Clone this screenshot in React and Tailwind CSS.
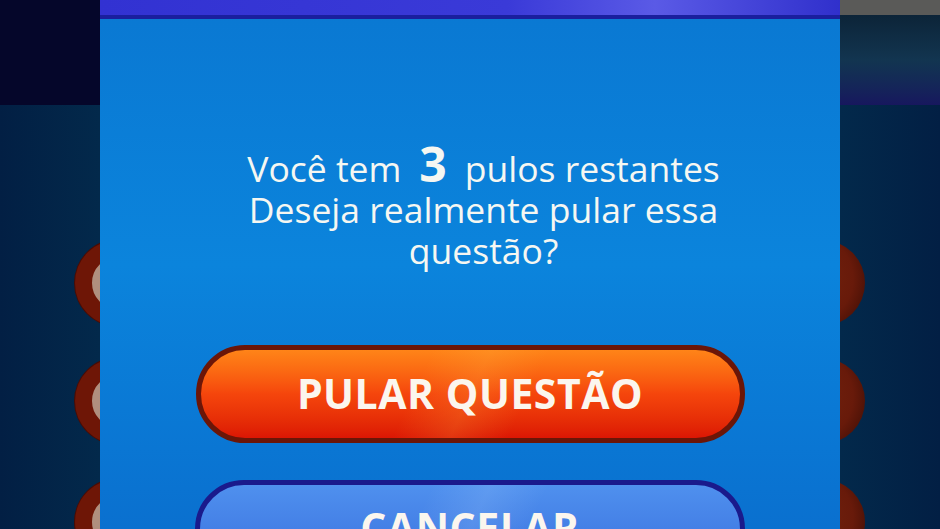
export default function App() {
  const font = { fontFamily: '"Open Sans", "Noto Sans", sans-serif' };
  return (
    <div className="relative w-[940px] h-[529px] overflow-hidden flex bg-[#032a4a]" style={font}>
      {/* left column */}
      <div className="w-[100px] shrink-0 flex flex-col">
        <div className="h-[105px] shrink-0 bg-[#05062a]" />
        <div className="flex-1 bg-gradient-to-r from-[#021f44] to-[#03294b]" />
      </div>

      {/* decorative circles behind panel */}
      {[283, 401, 522].map((y) => (
        <div
          key={'l' + y}
          className="absolute w-[86px] h-[86px] rounded-full left-[75px] bg-[#b08f7e] border-[17px] border-[#6e1606] shadow-[0_0_0_1px_#4a0c04]"
          style={{ top: y - 43 }}
        />
      ))}
      {[283, 401, 522].map((y) => (
        <div
          key={'r' + y}
          className="absolute w-[86px] h-[86px] rounded-full left-[779px] bg-[radial-gradient(circle_at_35%_45%,#74240e_0%,#681a0a_60%,#320a04_100%)]"
          style={{ top: y - 43 }}
        />
      ))}

      {/* panel */}
      <div className="relative z-10 w-[740px] shrink-0 flex flex-col bg-gradient-to-b from-[#0a78d2] via-[#0b84dc] to-[#0a70cf]">
        <div className="h-[15px] shrink-0 bg-[linear-gradient(90deg,#3232d2_0%,#3a3ad8_55%,#5a5ae6_75%,#3030cc_100%)]" />
        <div className="h-[4px] shrink-0 bg-[#1a1f9e]" />
        <div className="flex flex-col items-center pt-[124px] shrink-0">
          <div className="text-[#f5f7f2] text-[35.5px] leading-[41px] font-medium text-center pl-[27px]">
            <div className="flex items-baseline justify-center">
              <span>Você tem</span>
              <span className="text-[48px] font-bold mx-[18px] leading-[41px]">3</span>
              <span>pulos restantes</span>
            </div>
            <div>Deseja realmente pular essa</div>
            <div>questão?</div>
          </div>

          <button className="mt-[74px] shrink-0 w-[549px] h-[98px] rounded-full border-[5px] border-[#6b1608] bg-gradient-to-b from-[#ff8418] via-[#f5450c] to-[#dc1604] flex items-center justify-center relative overflow-hidden">
            <div className="absolute inset-0 bg-[linear-gradient(115deg,transparent_40%,rgba(255,190,70,0.18)_50%,transparent_60%)]" />
            <span className="relative text-[#fbf6ee] text-[41px] font-bold tracking-[0.5px]">PULAR QUESTÃO</span>
          </button>

          <button className="mt-[37px] shrink-0 w-[550px] h-[98px] rounded-full border-[5px] border-[#1a1a8c] bg-gradient-to-b from-[#4f90ee] to-[#3a6fde] flex items-start justify-center relative overflow-hidden">
            <div className="absolute inset-0 bg-[linear-gradient(115deg,transparent_40%,rgba(170,210,255,0.18)_50%,transparent_60%)]" />
            <span className="relative text-[#fbf6ee] text-[41px] font-bold tracking-[0.5px] mt-[14px] leading-[56px]">CANCELAR</span>
          </button>
        </div>
      </div>

      {/* right column */}
      <div className="w-[100px] shrink-0 flex flex-col">
        <div className="h-[15px] shrink-0 bg-[#5a5a58]" />
        <div className="h-[90px] shrink-0 bg-gradient-to-b from-[#0c2438] via-[#123550] to-[#17175e]" />
        <div className="flex-1 bg-gradient-to-r from-[#03294b] to-[#021f44]" />
      </div>
    </div>
  );
}
